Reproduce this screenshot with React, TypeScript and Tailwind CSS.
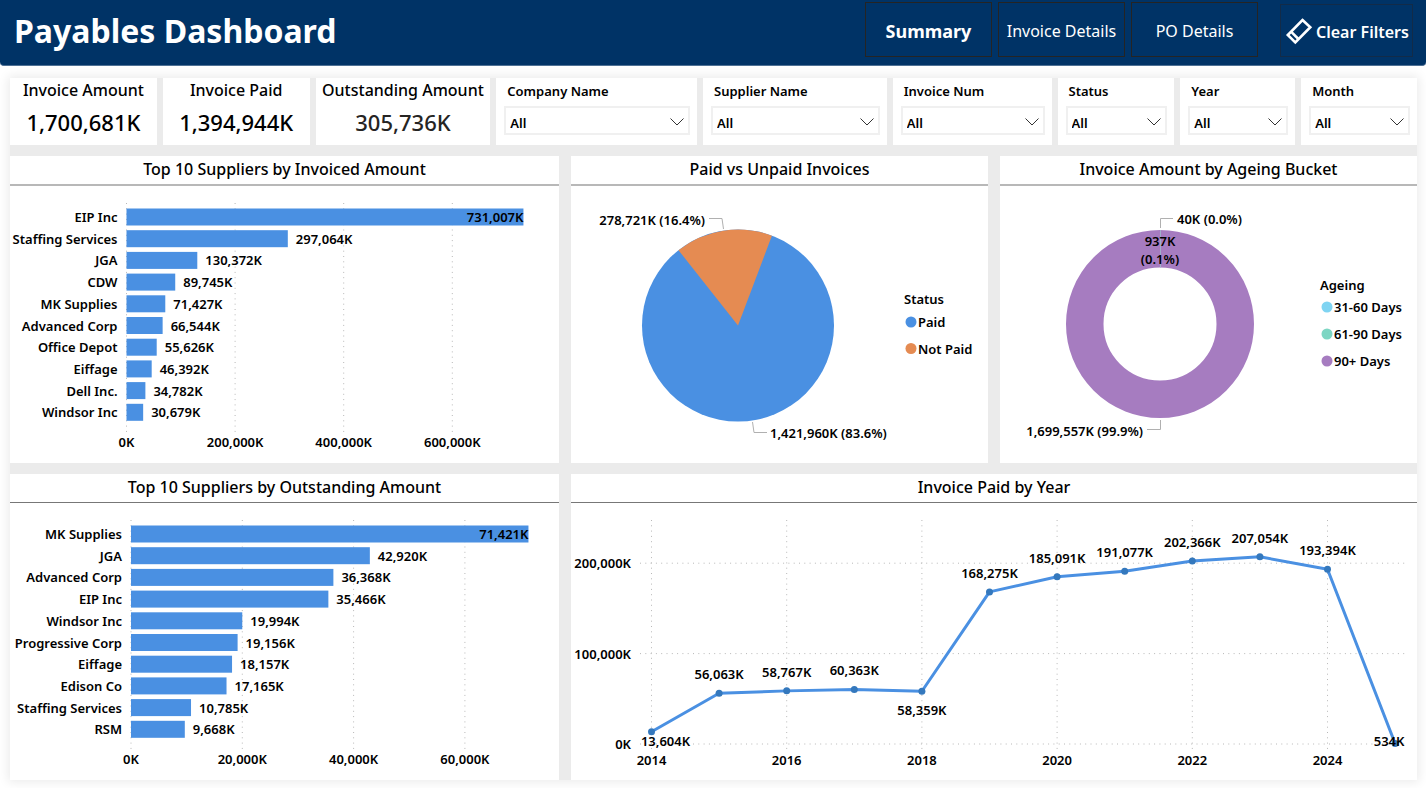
import React, { useState } from "react";

interface Supplier {
    name: string
    amount: number
}

interface YearPoint {
    year: number
    amount: number
    labelDx?: number
    labelDy?: number
}

interface Option {
    label: string
    id: string
}

const BLUE = '#4a90e2'

const kpis = [
    { label: 'Invoice Amount', value: '1,700,681K', color: 'text-black' },
    { label: 'Invoice Paid', value: '1,394,944K', color: 'text-black' },
    { label: 'Outstanding Amount', value: '305,736K', color: 'text-[#252423]' },
]

const filters: Array<Option> = [
    { label: 'Company Name', id: 'company' },
    { label: 'Supplier Name', id: 'supplier' },
    { label: 'Invoice Num', id: 'invoice' },
    { label: 'Status', id: 'status' },
    { label: 'Year', id: 'year' },
    { label: 'Month', id: 'month' },
]

const invoiced: Array<Supplier> = [
    { name: 'EIP Inc', amount: 731007 },
    { name: 'Staffing Services', amount: 297064 },
    { name: 'JGA', amount: 130372 },
    { name: 'CDW', amount: 89745 },
    { name: 'MK Supplies', amount: 71427 },
    { name: 'Advanced Corp', amount: 66544 },
    { name: 'Office Depot', amount: 55626 },
    { name: 'Eiffage', amount: 46392 },
    { name: 'Dell Inc.', amount: 34782 },
    { name: 'Windsor Inc', amount: 30679 },
]

const outstanding: Array<Supplier> = [
    { name: 'MK Supplies', amount: 71421 },
    { name: 'JGA', amount: 42920 },
    { name: 'Advanced Corp', amount: 36368 },
    { name: 'EIP Inc', amount: 35466 },
    { name: 'Windsor Inc', amount: 19994 },
    { name: 'Progressive Corp', amount: 19156 },
    { name: 'Eiffage', amount: 18157 },
    { name: 'Edison Co', amount: 17165 },
    { name: 'Staffing Services', amount: 10785 },
    { name: 'RSM', amount: 9668 },
]

const paidByYear: Array<YearPoint> = [
    { year: 2014, amount: 13604, labelDx: 14, labelDy: 9 },
    { year: 2015, amount: 56063 },
    { year: 2016, amount: 58767 },
    { year: 2017, amount: 60363 },
    { year: 2018, amount: 58359, labelDy: 19 },
    { year: 2019, amount: 168275 },
    { year: 2020, amount: 185091 },
    { year: 2021, amount: 191077 },
    { year: 2022, amount: 202366 },
    { year: 2023, amount: 207054 },
    { year: 2024, amount: 193394 },
    { year: 2025, amount: 534, labelDx: -6, labelDy: -3 },
]

const formatK = (n: number) => Intl.NumberFormat('en-US').format(n) + 'K'

function Label({ x, y, anchor = 'start', children }: {
    x: number
    y: number
    anchor?: 'start' | 'middle' | 'end'
    children: React.ReactNode
}) {
    // y is the vertical middle of the text
    return (
        <text x={x} y={y + 5} textAnchor={anchor} className="fill-black text-[13px] font-semibold">
            {children}
        </text>
    )
}

function Card({ title, rule, children }: { title: string, rule: string, children: React.ReactNode }) {
    return (
        <section className="bg-white min-w-0">
            <h2 className={'text-center text-base leading-[26px] pb-0.5 font-medium ' + rule}>{title}</h2>
            {children}
        </section>
    )
}

function BarChart({ data, origin, tick, tickWidth }: {
    data: Array<Supplier>
    origin: number
    tick: number
    tickWidth: number
}) {
    const pitch = 21.7
    return (
        <svg viewBox="0 0 549 277" className="block w-full h-auto" role="img">
            {[0, 1, 2, 3].map((i) => (
                <g key={i}>
                    <line
                        x1={origin + i * tickWidth} x2={origin + i * tickWidth} y1={17} y2={246}
                        stroke="#b8b8b8" strokeDasharray="1 4.3"
                    />
                    <Label x={origin + i * tickWidth} y={256} anchor="middle">{formatK(i * tick)}</Label>
                </g>
            ))}
            {data.map((e, i) => {
                const w = e.amount / tick * tickWidth
                const mid = 31 + i * pitch
                return (
                    <g key={e.name}>
                        <rect x={origin} y={mid - 8.5} width={w} height={17} fill={BLUE} />
                        <Label x={origin - 9} y={mid} anchor="end">{e.name}</Label>
                        {i === 0
                            ? <Label x={origin + w} y={mid} anchor="end">{formatK(e.amount)}</Label>
                            : <Label x={origin + w + 8} y={mid}>{formatK(e.amount)}</Label>}
                    </g>
                )
            })}
        </svg>
    )
}

function PieChart() {
    return (
        <svg viewBox="0 0 417 277" className="block w-full h-auto" role="img">
            <circle cx={167} cy={139.5} r={96} fill={BLUE} />
            <path d="M167 139.5 L107.5 64.2 A96 96 0 0 1 200.9 49.7 Z" fill="#e58b52" />
            <path d="M138 32.5 H151 L152.5 43 M181.5 236 L183 246.5 H196" fill="none" stroke="#b0b0b0" />
            <Label x={134} y={34} anchor="end">278,721K (16.4%)</Label>
            <Label x={199} y={247}>1,421,960K (83.6%)</Label>
            <Label x={333} y={113}>Status</Label>
            <circle cx={340} cy={136} r={5.5} fill={BLUE} />
            <Label x={347} y={136}>Paid</Label>
            <circle cx={340} cy={162.5} r={5.5} fill="#e58b52" />
            <Label x={347} y={163}>Not Paid</Label>
        </svg>
    )
}

function DonutChart() {
    const legend = [
        { label: '31-60 Days', color: '#7fd4f2', y: 121 },
        { label: '61-90 Days', color: '#7dd6c3', y: 148 },
        { label: '90+ Days', color: '#a67cc0', y: 175 },
    ]
    return (
        <svg viewBox="0 0 417 277" className="block w-full h-auto" role="img">
            <circle cx={160} cy={138} r={75.25} fill="none" stroke="#a67cc0" strokeWidth={37.5} />
            <path d="M160.5 44 V81.5" stroke="#9fb0cc" />
            <path d="M160.5 42 V32.5 H173 M160.5 234 V243.5 H147" fill="none" stroke="#b0b0b0" />
            <Label x={177} y={33}>40K (0.0%)</Label>
            <Label x={160} y={55} anchor="middle">937K</Label>
            <Label x={160} y={73} anchor="middle">(0.1%)</Label>
            <Label x={143} y={245} anchor="end">1,699,557K (99.9%)</Label>
            <Label x={320} y={99}>Ageing</Label>
            {legend.map((e) => (
                <g key={e.label}>
                    <circle cx={327} cy={e.y} r={5.5} fill={e.color} />
                    <Label x={334} y={e.y}>{e.label}</Label>
                </g>
            ))}
        </svg>
    )
}

function LineChart() {
    const px = (year: number) => 80.5 + (year - 2014) * 67.6
    const py = (amount: number) => 241 - amount / 100000 * 90.4
    return (
        <svg viewBox="0 0 846 277" className="block w-full h-auto" role="img">
            {[0, 100000, 200000].map((v) => (
                <g key={v}>
                    <line x1={69} x2={834} y1={py(v)} y2={py(v)} stroke="#b8b8b8" strokeDasharray="1 4.3" />
                    <Label x={60} y={py(v)} anchor="end">{formatK(v)}</Label>
                </g>
            ))}
            {[2014, 2016, 2018, 2020, 2022, 2024].map((y) => (
                <g key={y}>
                    <line x1={px(y)} x2={px(y)} y1={17} y2={246} stroke="#b8b8b8" strokeDasharray="1 4.3" />
                    <Label x={px(y)} y={257} anchor="middle">{y}</Label>
                </g>
            ))}
            <polyline
                points={paidByYear.map((e) => `${px(e.year)},${py(e.amount)}`).join(' ')}
                fill="none" stroke={BLUE} strokeWidth={3} strokeLinejoin="round"
            />
            {paidByYear.map((e) => (
                <g key={e.year}>
                    <circle cx={px(e.year)} cy={py(e.amount)} r={3.5} fill="#3478bd" />
                    <Label x={px(e.year) + (e.labelDx ?? 0)} y={py(e.amount) + (e.labelDy ?? -19)} anchor="middle">
                        {formatK(e.amount)}
                    </Label>
                </g>
            ))}
        </svg>
    )
}

function Filter({ label, id }: Option) {
    return (
        <div className="bg-white min-w-0 pt-1 pl-2 pr-[7px]">
            <label htmlFor={id} className="block pl-[3px] text-[13px] leading-[18px] font-semibold">{label}</label>
            <div className="relative mt-1.5">
                <select
                    id={id}
                    className="block w-full h-[29px] appearance-none border-2 border-[#f0f0f0] bg-white pl-1 pt-1 text-[13px] leading-5 font-semibold"
                >
                    <option>All</option>
                </select>
                <svg viewBox="0 0 14 8" className="absolute right-1.5 top-3 w-3.5 h-2 pointer-events-none">
                    <path d="M0.5 0.5 L7 7 L13.5 0.5" fill="none" stroke="#333" />
                </svg>
            </div>
        </div>
    )
}

export default function App() {
    const [page, setPage] = useState('Summary')

    return (
        <div className="min-h-screen bg-white text-black font-['Noto_Sans','Open_Sans',sans-serif]">
            <header className="flex items-start h-[66px] pl-3.5 pr-[13px] pt-0.5 bg-[#003366] rounded-b border-b border-[#4d6f94] text-white">
                <h1 className="flex-1 text-[32px] leading-[58px] font-bold">Payables Dashboard</h1>
                <nav className="flex gap-1.5">
                    {['Summary', 'Invoice Details', 'PO Details'].map((e) => (
                        <button
                            key={e}
                            type="button"
                            onClick={() => setPage(e)}
                            className={'w-[127px] h-[55px] pt-0.5 border border-[#252423] whitespace-nowrap ' + (page === e ? 'text-lg font-bold' : 'text-base')}
                        >
                            {e}
                        </button>
                    ))}
                </nav>
                <button
                    type="button"
                    className="flex items-center gap-[3px] w-[133px] h-[53px] ml-[22px] mt-0.5 pl-1 pt-0.5 border border-[#122b48] text-base font-semibold whitespace-nowrap"
                >
                    <svg viewBox="0 0 28 28" className="w-7 h-7 shrink-0" fill="none" stroke="white" strokeWidth={2.6}>
                        <path d="M17.5 2 L25.3 9.2 L10.3 24.5 L2.8 17 Z" />
                        <path d="M6.3 13.8 L13.4 21" />
                    </svg>
                    Clear Filters
                </button>
            </header>

            <main className="pt-3 pb-2 pl-2.5 pr-[9px]">
                <div className="flex flex-col gap-[11px] bg-[#ebebeb] shadow-[0_0_10px_2px_#ebebeb]">
                    <div className="grid grid-cols-[147fr_147fr_175fr_201fr_184fr_159fr_117fr_115fr_116fr] gap-1.5 h-[67px]">
                        {kpis.map((e) => (
                            <div key={e.label} className="bg-white min-w-0 text-center whitespace-nowrap">
                                <div className="text-base leading-6 font-medium">{e.label}</div>
                                <div className={'text-[22px] leading-10 font-medium ' + e.color}>{e.value}</div>
                            </div>
                        ))}
                        {filters.map((e) => (<Filter key={e.id} {...e} />))}
                    </div>
                    <div className="grid grid-cols-[549fr_417fr_417fr] gap-3">
                        <Card title="Top 10 Suppliers by Invoiced Amount" rule="border-b-2 border-[#b8b8b8]">
                            <BarChart data={invoiced} origin={116.5} tick={200000} tickWidth={108.6} />
                        </Card>
                        <Card title="Paid vs Unpaid Invoices" rule="border-b-2 border-[#b8b8b8]">
                            <PieChart />
                        </Card>
                        <Card title="Invoice Amount by Ageing Bucket" rule="border-b-2 border-[#b8b8b8]">
                            <DonutChart />
                        </Card>
                    </div>
                    <div className="grid grid-cols-[549fr_846fr] gap-3">
                        <Card title="Top 10 Suppliers by Outstanding Amount" rule="border-b border-[#777]">
                            <BarChart data={outstanding} origin={121} tick={20000} tickWidth={111.3} />
                        </Card>
                        <Card title="Invoice Paid by Year" rule="border-b border-[#777]">
                            <LineChart />
                        </Card>
                    </div>
                </div>
            </main>
        </div>
    )
}
